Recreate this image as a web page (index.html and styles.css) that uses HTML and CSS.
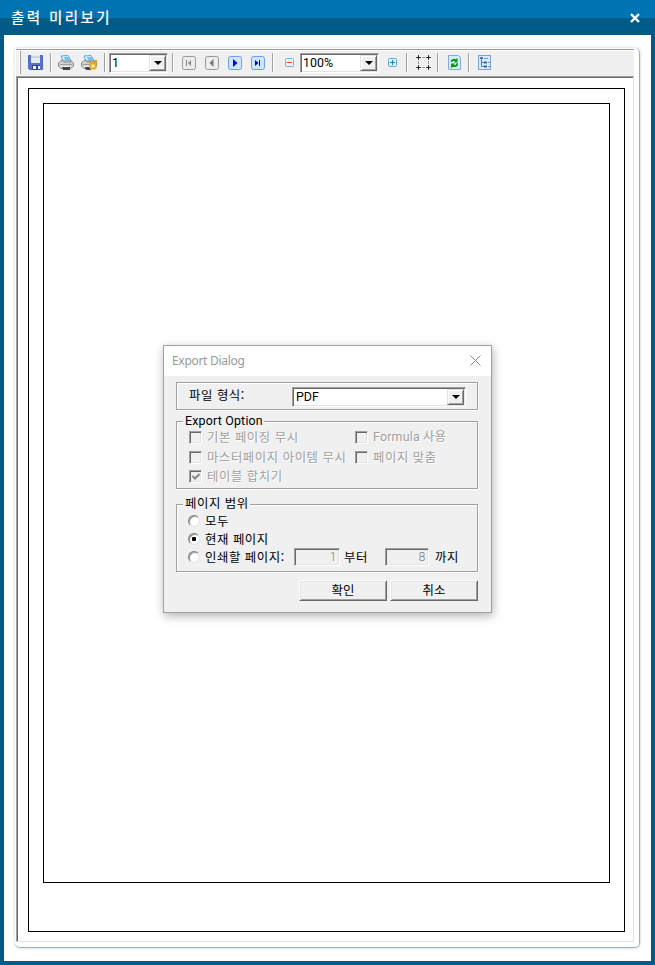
FILE: index.html
```html
<!DOCTYPE html>
<html lang="ko">
<head>
<meta charset="utf-8">
<title>출력 미리보기</title>
<link rel="stylesheet" href="styles.css">
</head>
<body>
<div class="window">
  <header class="titlebar">
    <h1 class="title">출력 미리보기</h1>
    <svg class="close" width="10" height="10" viewBox="0 0 10 10"><path d="M1 1L9 9M9 1L1 9" stroke="#fff" stroke-width="2.4"/></svg>
  </header>
  <main class="panel">
    <div class="applet">
      <div class="toolbar">
        <i class="grip"></i>
        <svg class="save" width="15" height="15" viewBox="0 0 15 15"><path d="M.5 .5H14.5V14.5H1.5L.5 13.5Z" fill="#5a70d0" stroke="#5067c4"/><path d="M3 0H12V8H3Z" fill="#e6eaf2"/><path d="M3 1H12V3H3Z" fill="#cbd3df"/><path d="M4 10H12V15H4Z" fill="#34478f"/><path d="M5 11H8V14H5ZM10 11H12V14H10Z" fill="#eef2ff"/></svg>
        <i class="sep s1"></i>
        <svg class="printer" width="16" height="15" viewBox="0 0 16 15"><path d="M5 6L3 1L10 .5L13 5.5Z" fill="#d9f2ff" stroke="#6f9fdc"/><path d="M6 2H10L12 5H7Z" fill="#67c7f8"/><path d="M.5 8L3 5.5H5L6 7H13L12.5 5.5L15.5 8V11L13 13.5H3L.5 11Z" fill="#d2d2cd" stroke="#858585"/><path d="M2 9.5H14" stroke="#a0a0a0"/><path d="M4 12H12V15H5Z" fill="#444"/><path d="M3 11.5H11" stroke="#f4f4f4"/></svg>
        <svg class="printer2" width="16" height="15" viewBox="0 0 16 15"><path d="M5 6L3 1L10 .5L13 5.5Z" fill="#d9f2ff" stroke="#6f9fdc"/><path d="M6 2H10L12 5H7Z" fill="#67c7f8"/><path d="M.5 8L3 5.5H5L6 7H13L12.5 5.5L15.5 8V11L13 13.5H3L.5 11Z" fill="#d2d2cd" stroke="#858585"/><path d="M2 9.5H10" stroke="#a0a0a0"/><path d="M4 12H10V15H5Z" fill="#444"/><path d="M3 11.5H9" stroke="#f4f4f4"/><path d="M9 5V7L11 9M15 5V7L13 9" fill="none" stroke="#d99c20" stroke-width="2"/><rect x="9.5" y="8.5" width="5" height="5" rx="1" fill="#fff1b0" stroke="#e7a91e" stroke-width="2"/></svg>
        <i class="sep s2"></i>
        <div class="combo page-no"><span>1</span><b class="drop"></b></div>
        <i class="sep s3"></i>
        <svg class="nav first" width="14" height="14" viewBox="0 0 14 14"><rect x=".5" y=".5" width="13" height="13" rx="2" fill="#ececec" stroke="#999"/><path d="M4.5 4V10" stroke="#858585"/><path d="M9 4V10L6 7Z" fill="#858585"/></svg>
        <svg class="nav" width="14" height="14" viewBox="0 0 14 14"><rect x=".5" y=".5" width="13" height="13" rx="2" fill="#ececec" stroke="#999"/><path d="M8.5 3V11L4.5 7Z" fill="#777"/></svg>
        <svg class="nav" width="14" height="14" viewBox="0 0 14 14"><rect x=".5" y=".5" width="13" height="13" rx="2" fill="#cfe4ff" stroke="#6fa0ed"/><path d="M5 3V11L9.5 7Z" fill="#0000ef"/></svg>
        <svg class="nav" width="14" height="14" viewBox="0 0 14 14"><rect x=".5" y=".5" width="13" height="13" rx="2" fill="#cfe4ff" stroke="#6fa0ed"/><path d="M4 4V10L7.5 7Z" fill="#0000ef"/><path d="M8.5 4V10" stroke="#0000ef"/></svg>
        <i class="sep s4"></i>
        <svg class="minus" width="9" height="9" viewBox="0 0 9 9"><rect x=".5" y=".5" width="8" height="8" rx="1" fill="#e6f1f7" stroke="#8eabc0"/><path d="M2 4.5H7" stroke="#f43c18"/></svg>
        <div class="combo scale"><span>100%</span><b class="drop"></b></div>
        <svg class="plus" width="9" height="9" viewBox="0 0 9 9"><rect x=".5" y=".5" width="8" height="8" rx="1" fill="#d9f2ff" stroke="#66a9d1"/><path d="M2 4.5H7M4.5 2V7" stroke="#1684cf"/></svg>
        <i class="sep s5"></i>
        <svg class="margins" width="15" height="15" viewBox="0 0 15 15"><path d="M2.5 0V1M2.5 4V5M12.5 0V1M12.5 4V5M2.5 10V11M2.5 14V15M12.5 10V11M12.5 14V15M0 2.5H1M4 2.5H5M10 2.5H11M14 2.5H15M0 12.5H1M4 12.5H5M10 12.5H11M14 12.5H15" stroke="#444"/><path d="M2.5 6V9M12.5 6V9M6 2.5H9M6 12.5H9" stroke="#999"/><path d="M1 2H4V3H1ZM2 1H3V4H2ZM11 2H14V3H11ZM12 1H13V4H12ZM1 12H4V13H1ZM2 11H3V14H2ZM11 12H14V13H11ZM12 11H13V14H12Z" fill="#222"/></svg>
        <i class="sep s6"></i>
        <svg class="refresh" width="13" height="15" viewBox="0 0 13 15"><path d="M.5 .5H10.5L12.5 2.5V14.5H.5Z" fill="#d9e9fd" stroke="#84a9df"/><path d="M3 7V5L5 4H8L9.5 3V7.5H6L7 6H5.500L4 7ZM3 8.500H7L6 10H7.500L9 8H10V10.500L8 12H5L3 13Z" fill="#099b17"/></svg>
        <i class="sep s7"></i>
        <svg class="tree" width="13" height="15" viewBox="0 0 13 15"><rect x=".5" y=".5" width="12" height="14" fill="#dceafd" stroke="#7aa4de"/><path d="M3.5 4V11.5H6M3.5 7.5H6" fill="none" stroke="#66798f"/><path d="M2 2H5V4H2Z" fill="#447cc2"/><path d="M6 3.5H10M10 7.5H12M10 11.5H12" stroke="#7898bd"/><path d="M6 6.5H9V8.5H6ZM6 10.5H9V12.5H6Z" fill="#3467aa"/></svg>
      </div>
      <div class="viewer"><div class="sheet"><div class="frame"></div></div></div>
    </div>
  </main>
  <section class="dialog">
    <header class="dialog-head"><span>Export Dialog</span>
      <svg width="11" height="11" viewBox="0 0 11 11"><path d="M.5 .5L10.5 10.5M10.5 .5L.5 10.5" stroke="#888" stroke-width="1"/></svg>
    </header>
    <div class="group format">
      <label class="t-format">파일 형식:</label>
      <div class="combo type"><span>PDF</span><b class="drop"></b></div>
    </div>
    <div class="group options">
      <h2 class="t-option">Export Option</h2>
      <div class="grid">
        <label><i class="check"></i><span class="t-basic">기본 페이징 무시</span></label>
        <label><i class="check"></i><span class="t-formula">Formula 사용</span></label>
        <label><i class="check"></i><span class="t-master">마스터페이지 아이템 무시</span></label>
        <label><i class="check"></i><span class="t-fit">페이지 맞춤</span></label>
        <label><i class="check"><svg width="8" height="8" viewBox="0 0 8 8"><path d="M.5 3L3 5.5L7.5 1" fill="none" stroke="#888" stroke-width="2"/></svg></i><span class="t-merge">테이블 합치기</span></label>
      </div>
    </div>
    <div class="group range">
      <h2 class="t-range">페이지 범위</h2>
      <div class="line"><i class="radio"></i><span class="t-all">모두</span></div>
      <div class="line"><i class="radio on"></i><span class="t-current">현재 페이지</span></div>
      <div class="line"><i class="radio"></i><span class="t-print">인쇄할 페이지:</span><span class="num from">1</span><span class="t-from">부터</span><span class="num to">8</span><span class="t-to">까지</span></div>
    </div>
    <div class="actions"><button>확인</button><button>취소</button></div>
  </section>
</div>
</body>
</html>
```
FILE: styles.css
```css
* { box-sizing: border-box; }
body { margin: 0; font: 12.4px/16px "Noto Sans CJK KR", sans-serif; color: #000; }
h1, h2 { margin: 0; font: inherit; }
svg { display: block; flex: none; }
span, label, h1, h2 { white-space: nowrap; }
.window { position: relative; width: 655px; height: 965px; background: #005c86; padding: 0 4px 4px; display: flex; flex-direction: column; }
.titlebar { height: 35px; margin: 0 -4px; padding: 0 15px 0 11px; display: flex; justify-content: space-between; align-items: center; background: linear-gradient(#0073b2 18px, #005c86 18px); }
.title { color: #fff; font-size: 14.5px; font-weight: 500; letter-spacing: 2.4px; margin-top: -2px; }
.panel { flex: 1; background: #fff; padding: 13px 11px 13px; display: flex; }
.applet { flex: 1; display: flex; flex-direction: column; padding: 1px 5px 5px 1px; border-right: 1px solid #8fb2d5; border-bottom: 1px solid #8fb2d5; border-radius: 3px 5px 5px 5px; box-shadow: 0 0 3px #c8c8c8; }

.toolbar { height: 27px; flex: none; display: flex; align-items: center; padding: 0 0 1px 3px; background: #f0f0f0; border-top: 1px solid #999; box-shadow: inset 0 1px #fff; }
.grip { width: 2px; height: 23px; border-left: 1px solid #fff; border-right: 1px solid #a0a0a0; }
.sep { width: 2px; height: 19px; border-left: 1px solid #a0a0a0; border-right: 1px solid #fff; }
.save { margin: 0 1px 0 7px; }
.s1 { margin-left: 6px; }
.printer { margin-left: 6px; }
.printer2 { margin-left: 7px; }
.s2, .s4 { margin-left: 7px; }
.page-no { width: 59px; margin-left: 3px; }
.s3 { margin-left: 4px; }
.nav { margin-left: 9px; }
.nav.first { margin-left: 8px; }
.minus { margin-left: 11px; }
.scale { width: 79px; margin-left: 6px; }
.plus, .s5 { margin-left: 9px; }
.margins { margin-left: 8px; }
.s6 { margin-left: 6px; }
.refresh { margin-left: 9px; }
.s7 { margin-left: 7px; }
.tree { margin-left: 8px; }

.combo { height: 20px; display: flex; justify-content: space-between; background: #fff; border: 1px solid; border-color: #a0a0a0 #fff #fff #a0a0a0; box-shadow: inset 1px 1px #696969, inset -1px -1px #e3e3e3; padding: 1px 1px 1px 3px; line-height: 16px; font-family: Roboto, sans-serif; }
.toolbar .combo { padding-left: 2px; line-height: 15px; }
.drop { width: 17px; height: 16px; display: flex; align-items: center; justify-content: center; background: #f0f0f0; border: 1px solid; border-color: #e3e3e3 #696969 #696969 #e3e3e3; box-shadow: inset 1px 1px #fff, inset -1px -1px #a0a0a0; }
.drop::after { content: ""; border: 4px solid transparent; border-top-color: #000; border-bottom: 0; }

.viewer { flex: 1; background: #fff; border: 1px solid; border-color: #a0a0a0 #e3e3e3 #e3e3e3 #a0a0a0; box-shadow: inset 1px 1px #696969; padding: 11px 8px 9px 11px; display: flex; }
.sheet { flex: 1; border: 1px solid #000; padding: 14px 14px 48px; display: flex; }
.frame { flex: 1; border: 1px solid #000; }

.dialog { position: absolute; left: 163px; top: 345px; width: 329px; height: 268px; background: #f0f0f0; border: 1px solid #a0a0a0; box-shadow: 1px 3px 9px rgba(0,0,0,.3); padding: 0 13px 0 12px; }
.dialog-head { height: 30px; margin: 0 -13px 6px -12px; padding: 0 10px 1px 8px; background: #fff; color: #999; display: flex; align-items: center; justify-content: space-between; font: 12px "Noto Sans", sans-serif; letter-spacing: -.3px; }
.group { width: 302px; border: 1px solid #a0a0a0; box-shadow: 1px 1px #fff, inset 1px 1px #fff; letter-spacing: .55px; }
.format { height: 28px; display: flex; padding: 4px 11px 0 12px; justify-content: space-between; }
.format label { line-height: 16px; }
.type { width: 174px; letter-spacing: 0; }
.options { height: 68px; margin-top: 11px; padding-left: 6px; }
.range { height: 68px; margin-top: 15px; padding-left: 6px; }
.group h2 { width: max-content; height: 16px; margin: -10px 0 1px; padding: 0 1px 0 2px; background: #f0f0f0; }
.t-option, .t-formula { font-family: Roboto, "Noto Sans CJK KR", sans-serif; letter-spacing: .2px; }
.group .t-option { line-height: 18px; }
.grid { display: grid; grid-template-columns: 166px 1fr; grid-template-rows: 20px 20px 18px; margin: -2px 0 0 6px; color: #a0a0a0; text-shadow: 1px 1px #fff; }
.grid label { display: flex; align-items: center; }
.check { flex: none; width: 13px; height: 13px; margin-right: 5px; border: 1px solid; border-color: #a0a0a0 #fff #fff #a0a0a0; box-shadow: inset 1px 1px #696969, inset -1px -1px #e3e3e3; padding: 2px; }
.line { height: 18px; display: flex; align-items: center; padding-left: 5px; }
.radio { width: 12px; height: 12px; margin-right: 5px; border-radius: 50%; background: #fff; border: 1px solid; border-color: #808080 #e3e3e3 #e3e3e3 #808080; box-shadow: inset 1px 1px #999; display: flex; align-items: center; justify-content: center; }
.radio.on::after { content: ""; width: 4px; height: 4px; border-radius: 1px; background: #000; }
.t-print { width: 89px; }
.num { width: 46px; height: 18px; border: 1px solid; border-color: #a0a0a0 #fff #fff #a0a0a0; box-shadow: inset 1px 1px #696969, inset -1px -1px #e3e3e3; color: #808080; text-align: right; padding-right: 2px; font-family: Roboto, sans-serif; font-weight: 300; }
.t-from { width: 41px; margin-left: 4px; }
.to { width: 44px; }
.t-to { margin-left: 6px; }
.actions { display: flex; gap: 3px; margin: 8px 0 0 123px; }
button { width: 88px; height: 21px; padding: 0 0 1px; font: inherit; color: #000; background: #f0f0f0; border: 1px solid; border-color: #fff #696969 #696969 #fff; box-shadow: inset 1px 1px #e3e3e3, inset -1px -1px #a0a0a0; }
```
